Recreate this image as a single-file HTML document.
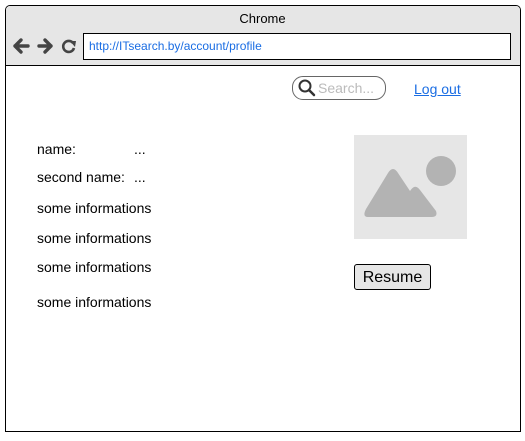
<!DOCTYPE html>
<html><head><style>
body{margin:0;width:525px;height:441px;background:#fff;font-family:"Liberation Sans",Arial,sans-serif;position:relative;overflow:hidden}
.a{position:absolute}
.t{position:absolute;font-size:14px;color:#000;line-height:16px}
</style></head><body>
<div class="a" style="left:5px;top:5px;width:514px;height:425px;border:1px solid #000;border-radius:5px 5px 0 0"></div>
<div class="a" style="left:6px;top:6px;width:514px;height:59px;background:#e6e6e6;border-bottom:1px solid #000;border-radius:4px 4px 0 0"></div>
<div class="t" style="left:0;width:525px;text-align:center;top:11px;font-size:13px">Chrome</div>
<svg class="a" style="left:12px;top:37px" width="68" height="20" viewBox="0 0 68 20">
<g stroke="#444" stroke-width="3.4" fill="none" stroke-linecap="round" stroke-linejoin="round">
<path d="M16 9H3M9 3L3 9L9 15"/>
<path d="M27 9H39M33 3L39 9L33 15"/>
</g>
<path d="M61 6A5.5 5.5 0 1 0 62 11" stroke="#444" stroke-width="2.6" fill="none"/>
<path d="M58 4L64 4L63 10Z" fill="#444"/>
</svg>
<div class="a" style="left:83px;top:33px;width:426px;height:25px;background:#fff;border:1px solid #000"></div>
<div class="t" style="left:89px;top:38px;font-size:12px;color:#1a6de3">http://ITsearch.by/account/profile</div>
<div class="a" style="left:292px;top:76px;width:92px;height:22px;border:1px solid #666;border-radius:11px;background:#fff"></div>
<svg class="a" style="left:297px;top:78px" width="20" height="20"><circle cx="8" cy="8" r="5.5" stroke="#333" stroke-width="2" fill="none"/><path d="M12 12L17 17" stroke="#333" stroke-width="2.5" stroke-linecap="round"/></svg>
<div class="t" style="left:318px;top:80px;color:#bbb">Search...</div>
<div class="t" style="left:414px;top:81px;color:#1a6de3;text-decoration:underline">Log out</div>
<div class="t" style="left:37px;top:141px">name:</div>
<div class="t" style="left:134px;top:141px">...</div>
<div class="t" style="left:37px;top:169px">second name:</div>
<div class="t" style="left:134px;top:169px">...</div>
<div class="t" style="left:37px;top:200px">some informations</div>
<div class="t" style="left:37px;top:230px">some informations</div>
<div class="t" style="left:37px;top:259px">some informations</div>
<div class="t" style="left:37px;top:294px">some informations</div>
<svg class="a" style="left:354px;top:135px" width="113" height="104">
<rect width="113" height="104" fill="#e6e6e6"/>
<circle cx="87" cy="36" r="15" fill="#b3b3b3"/>
<path d="M14 82Q8 82 12 74L34 38Q39 30 44 38L56 56Q61 48 66 55L82 76Q84 82 78 82Z" fill="#b3b3b3"/>
</svg>
<div class="a" style="left:354px;top:264px;width:75px;height:24px;border:1px solid #000;border-radius:3px;background:#e6e6e6;font-size:16px;line-height:26px;text-align:center">Resume</div>
</body></html>
